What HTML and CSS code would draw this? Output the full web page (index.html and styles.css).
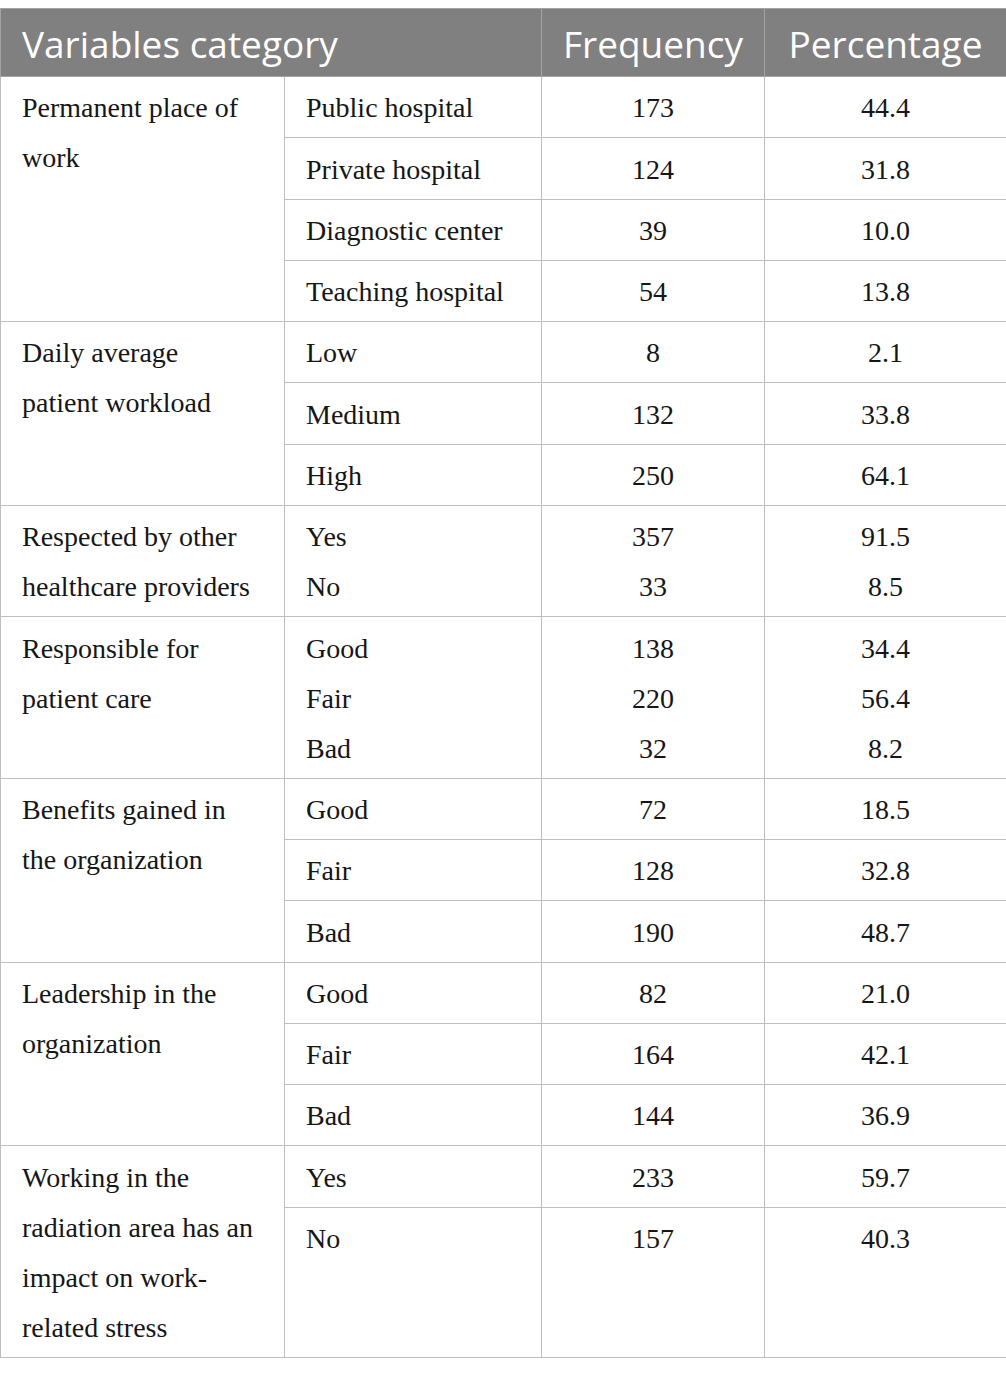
FILE: index.html
```html
<!DOCTYPE html>
<html>
<head>
<meta charset="utf-8">
<link rel="stylesheet" href="styles.css">
</head>
<body>
<table class="tbl">
  <colgroup>
    <col class="c1"><col class="c2"><col class="c3"><col class="c4">
  </colgroup>
  <thead>
    <tr>
      <th colspan="2" class="left">Variables category</th>
      <th>Frequency</th>
      <th>Percentage</th>
    </tr>
  </thead>
  <tbody>
    <tr><td rowspan="4">Permanent place of<br>work</td><td>Public hospital</td><td class="num">173</td><td class="num">44.4</td></tr>
    <tr><td>Private hospital</td><td class="num">124</td><td class="num">31.8</td></tr>
    <tr><td>Diagnostic center</td><td class="num">39</td><td class="num">10.0</td></tr>
    <tr><td>Teaching hospital</td><td class="num">54</td><td class="num">13.8</td></tr>

    <tr><td rowspan="3">Daily average<br>patient workload</td><td>Low</td><td class="num">8</td><td class="num">2.1</td></tr>
    <tr><td>Medium</td><td class="num">132</td><td class="num">33.8</td></tr>
    <tr><td>High</td><td class="num">250</td><td class="num">64.1</td></tr>

    <tr><td>Respected by other<br>healthcare providers</td><td>Yes<br>No</td><td class="num">357<br>33</td><td class="num">91.5<br>8.5</td></tr>

    <tr><td>Responsible for<br>patient care</td><td>Good<br>Fair<br>Bad</td><td class="num">138<br>220<br>32</td><td class="num">34.4<br>56.4<br>8.2</td></tr>

    <tr><td rowspan="3">Benefits gained in<br>the organization</td><td>Good</td><td class="num">72</td><td class="num">18.5</td></tr>
    <tr><td>Fair</td><td class="num">128</td><td class="num">32.8</td></tr>
    <tr><td>Bad</td><td class="num">190</td><td class="num">48.7</td></tr>

    <tr><td rowspan="3">Leadership in the<br>organization</td><td>Good</td><td class="num">82</td><td class="num">21.0</td></tr>
    <tr><td>Fair</td><td class="num">164</td><td class="num">42.1</td></tr>
    <tr><td>Bad</td><td class="num">144</td><td class="num">36.9</td></tr>

    <tr><td rowspan="2">Working in the<br>radiation area has an<br>impact on work-<br>related stress</td><td>Yes</td><td class="num">233</td><td class="num">59.7</td></tr>
    <tr class="tall"><td>No</td><td class="num">157</td><td class="num">40.3</td></tr>
  </tbody>
</table>
</body>
</html>
```

FILE: styles.css
```css
html, body {
  margin: 0;
  padding: 0;
  background: #ffffff;
}
body {
  padding-top: 8px;
}
.tbl {
  width: 1006px;
  table-layout: fixed;
  border-collapse: collapse;
  font-family: "Liberation Serif", "Times New Roman", serif;
  font-size: 28px;
  color: #161616;
}
.c1 { width: 284px; }
.c2 { width: 257px; }
.c3 { width: 223px; }
.c4 { width: 242px; }

.tbl th {
  background: #808080;
  color: #ffffff;
  font-family: "Open Sans", "Noto Sans", sans-serif;
  font-weight: 400;
  font-size: 37px;
  line-height: 48px;
  padding: 11px 12px 8px;
  border: 1px solid #a3a3a3;
  text-align: center;
  white-space: nowrap;
}
.tbl th.left {
  text-align: left;
  padding-left: 21px;
}
.tbl td {
  border: 1px solid #bdbdbd;
  vertical-align: top;
  line-height: 50px;
  padding: 6.3px 12px 4px 21px;
  text-align: left;
  white-space: nowrap;
}
.tbl td.num {
  text-align: center;
  padding-left: 12px;
  padding-right: 12px;
}
.tbl .tall td {
  height: 139px;
}
```
